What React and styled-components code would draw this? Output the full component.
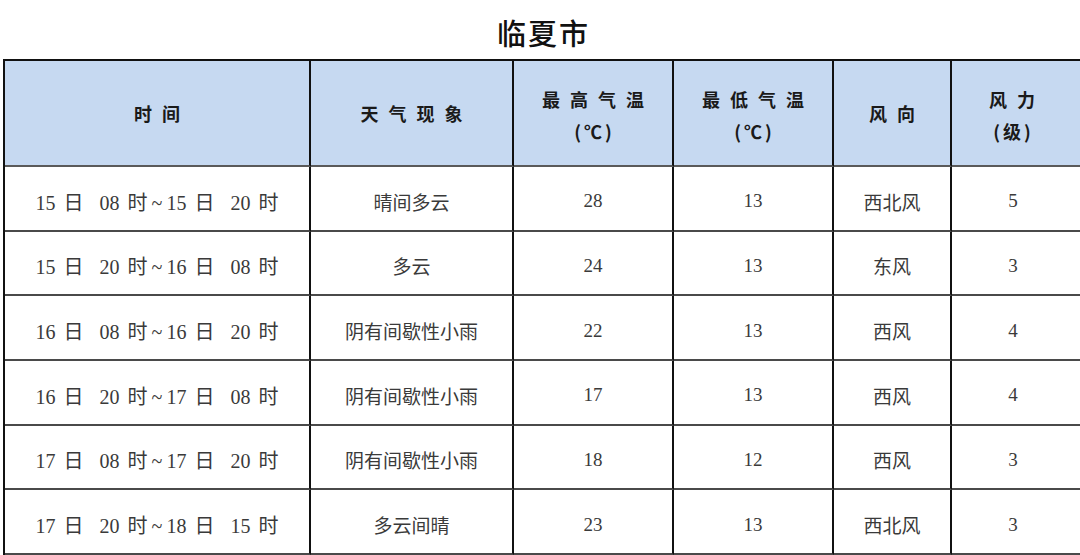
import styled, { createGlobalStyle } from 'styled-components'

const GlobalStyle = createGlobalStyle`
    html, body {
        margin: 0;
        padding: 0;
        background: #ffffff;
        overflow: hidden;
    }
    body {
        font-family: "Liberation Serif", "Noto Sans CJK SC", serif;
    }
`

const Page = styled.div`
    width: 1080px;
    height: 555px;
    padding-left: 3px;
    box-sizing: border-box;
`

const Title = styled.h1`
    margin: 0;
    height: 59px;
    display: flex;
    align-items: center;
    justify-content: center;
    padding-top: 4px;
    padding-left: 4px;
    box-sizing: border-box;
    font-family: "Noto Sans CJK SC", sans-serif;
    font-size: 29px;
    font-weight: 500;
    letter-spacing: 2px;
    color: #111;
`

const Table = styled.div`
    display: grid;
    grid-template-columns: 306px 203px 160px 160px 118px 132px;
    grid-template-rows: 106px repeat(6, 64.67px);
    width: 1081px;
    border-top: 2px solid #111;
    border-left: 2px solid #111;
    box-sizing: border-box;
`

const Cell = styled.div`
    display: flex;
    align-items: center;
    justify-content: center;
    box-sizing: border-box;
    border-right: 2px solid #111;
    border-bottom: 2px solid #4a4a4a;
    padding-top: 6px;
    padding-right: ${p => p.$last ? '8px' : '0'};
    font-family: "Liberation Serif", "Noto Sans CJK SC", serif;
    font-size: ${p => p.$wide ? '20px' : '19px'};
    color: #3a3a3a;
    white-space: pre;
    word-spacing: ${p => p.$wide ? '3px' : '0'};
`

const HeadCell = styled(Cell)`
    flex-direction: column;
    gap: 10px;
    padding-top: 0;
    padding-left: 10px;
    padding-right: ${p => p.$last ? '10px' : '0'};
    background: #c6d9f1;
    border-bottom-color: #5a5a5a;
    font-family: "Noto Sans CJK SC", sans-serif;
    font-weight: 700;
    font-size: 18px;
    color: #1a1a1a;
    letter-spacing: 10px;
`

const Unit = styled.span`
    letter-spacing: 3px;
    margin-right: 7px;
    font-size: 18px;
    font-weight: 700;
    line-height: 1;
`

const headers = [
    { lines: ['时间'] },
    { lines: ['天气现象'] },
    { lines: ['最高气温', '(℃)'] },
    { lines: ['最低气温', '(℃)'] },
    { lines: ['风向'] },
    { lines: ['风力', '(级)'] },
]

// thin spaces around the tilde, like the source document
const span = (a, b, c, d) => `${a} 日  ${b} 时\u2009~\u2009${c} 日  ${d} 时`

const rows = [
    [span('15', '08', '15', '20'), '晴间多云', '28', '13', '西北风', '5'],
    [span('15', '20', '16', '08'), '多云', '24', '13', '东风', '3'],
    [span('16', '08', '16', '20'), '阴有间歇性小雨', '22', '13', '西风', '4'],
    [span('16', '20', '17', '08'), '阴有间歇性小雨', '17', '13', '西风', '4'],
    [span('17', '08', '17', '20'), '阴有间歇性小雨', '18', '12', '西风', '3'],
    [span('17', '20', '18', '15'), '多云间晴', '23', '13', '西北风', '3'],
]

export default function App() {
    return (
        <Page>
            <GlobalStyle />
            <Title>临夏市</Title>
            <Table>
                {headers.map((h, i) => (
                    <HeadCell key={'h' + i} $last={i === 5}>
                        <span>{h.lines[0]}</span>
                        {h.lines[1] ? <Unit>{h.lines[1]}</Unit> : null}
                    </HeadCell>
                ))}
                {rows.map((row, r) =>
                    row.map((value, c) => (
                        <Cell key={r + '-' + c} $wide={c === 0} $last={c === 5}>{value}</Cell>
                    ))
                )}
            </Table>
        </Page>
    )
}
